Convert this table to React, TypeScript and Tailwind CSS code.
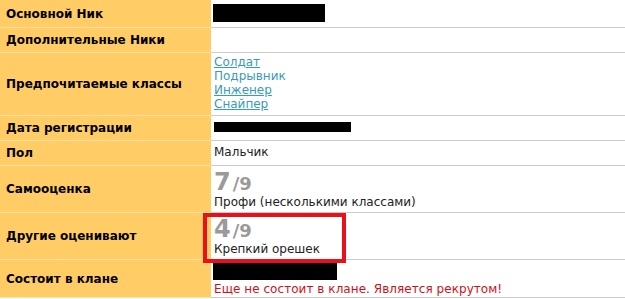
import React from "react";

type Row = {
  label: string;
  height: string;
  align?: string;
  content: React.ReactNode;
};

const Redacted = ({ w, h }: { w: string; h: string }) => (
  <div className={`bg-black ${w} ${h}`} />
);

const Score = ({ value, caption }: { value: number; caption: string }) => (
  <div className="flex flex-col">
    <div className="flex items-baseline font-bold text-[#9a9a9a] leading-[23px]">
      <span className="text-[24px]">{value}</span>
      <span className="text-[18px] ml-[2px]">/9</span>
    </div>
    <div className="leading-[14px]">{caption}</div>
  </div>
);

const classes = [
  { name: "Солдат", underline: true },
  { name: "Подрывник", underline: false },
  { name: "Инженер", underline: true },
  { name: "Снайпер", underline: true },
];

const rows: Row[] = [
  {
    label: "Основной Ник",
    height: "h-[28px]",
    align: "pt-[4px]",
    content: <div className="bg-black w-[112px] h-[18px] -ml-[1px]" />,
  },
  { label: "Дополнительные Ники", height: "h-[25px]", content: null },
  {
    label: "Предпочитаемые классы",
    height: "h-[63px]",
    align: "pt-[2px]",
    content: (
      <div className="flex flex-col leading-[14px] text-[#3a9bb5]">
        {classes.map((c) => (
          <a key={c.name} href="#" className={c.underline ? "underline" : ""}>
            {c.name}
          </a>
        ))}
      </div>
    ),
  },
  {
    label: "Дата регистрации",
    height: "h-[25px]",
    align: "pt-[6px]",
    content: <Redacted w="w-[137px]" h="h-[10px]" />,
  },
  {
    label: "Пол",
    height: "h-[25px]",
    align: "pt-[4px]",
    content: <div className="leading-[14px]">Мальчик</div>,
  },
  {
    label: "Самооценка",
    height: "h-[47px]",
    align: "pt-[5px]",
    content: <Score value={7} caption="Профи (несколькими классами)" />,
  },
  {
    label: "Другие оценивают",
    height: "h-[47px]",
    align: "pt-[5px]",
    content: <Score value={4} caption="Крепкий орешек" />,
  },
  {
    label: "Состоит в клане",
    height: "h-[38px]",
    align: "pt-[2px]",
    content: (
      <div className="flex flex-col">
        <div className="bg-black w-[124px] h-[18px] -ml-[1px]" />
        <div className="text-[#cc1122] leading-[14px] mt-[2px] tracking-[0.05px]">
          Еще не состоит в клане. Является рекрутом!
        </div>
      </div>
    ),
  },
];

export default function App() {
  return (
    <div className="relative w-[625px] h-[299px] bg-white font-['DejaVu_Sans',Verdana,sans-serif] text-[12px] text-[#222]">
      <div className="flex flex-col">
        {rows.map((row) => (
          <div key={row.label} className={`flex ${row.height}`}>
            <div className="w-[211px] shrink-0 flex items-center pl-[6px] bg-[#ffcc66] border-b border-[#ffe1a6] font-bold text-black">
              {row.label}
            </div>
            <div className={`flex-1 pl-[3px] border-b border-[#cccccc] ${row.align ?? ""}`}>
              {row.content}
            </div>
          </div>
        ))}
      </div>

      {/* hand-drawn highlight around the peer rating */}
      <div className="absolute left-[203px] top-[213px] w-[143px] h-[50px] border-[4px] border-[#e8101a]" />
    </div>
  );
}
